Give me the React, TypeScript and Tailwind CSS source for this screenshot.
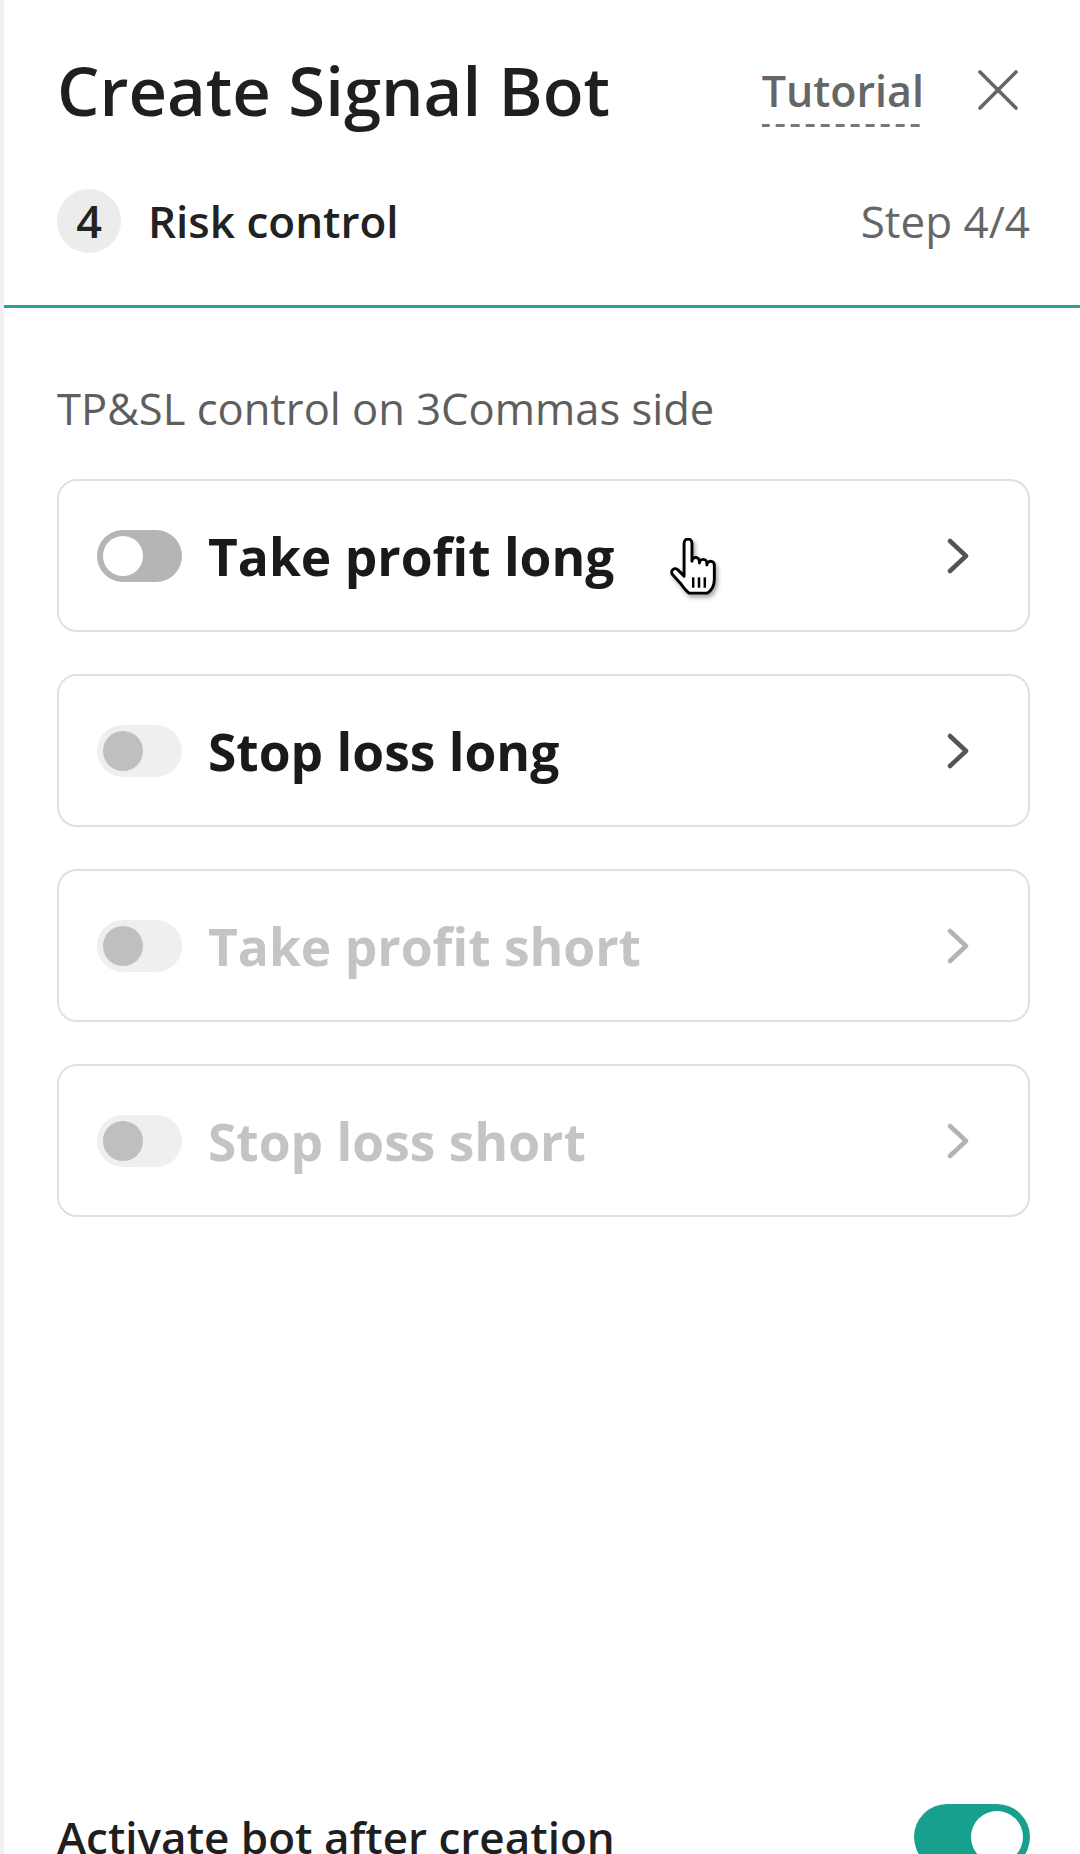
import React from 'react';

type RowProps = {
  label: string;
  variant: 'off' | 'disabled' | 'muted';
  cursor?: boolean;
};

function CloseIcon() {
  return (
    <svg width="42" height="42" viewBox="0 0 42 42" fill="none" stroke="#666666" strokeWidth="3.6" strokeLinecap="round">
      <line x1="3" y1="3" x2="39" y2="39" />
      <line x1="39" y1="3" x2="3" y2="39" />
    </svg>
  );
}

function Chevron({ color }: { color: string }) {
  return (
    <svg width="22" height="36" viewBox="0 0 22 36" fill="none" stroke={color} strokeWidth="4.5" strokeLinecap="round" strokeLinejoin="round">
      <polyline points="3,3 19,18 3,33" />
    </svg>
  );
}

function HandCursor() {
  return (
    <svg
      width="52"
      height="58"
      viewBox="0 0 25 28"
      className="absolute left-[608px] top-[57px] drop-shadow-[2px_3px_2px_rgba(0,0,0,0.35)]"
    >
      <path
        d="M8.2 2.4a1.9 1.9 0 0 1 3.8 0V11.2a1.8 1.8 0 0 1 3.6 0v0.9a1.8 1.8 0 0 1 3.6 0v0.9a1.8 1.8 0 0 1 3.6 0V20c0 3-1.6 5.4-3.4 6.6H10.6c-1.4-1-2.8-2.8-4.2-4.8L2.6 17.6a1.7 1.7 0 0 1 2.6-2.2L8.2 18.4Z"
        fill="#ffffff"
        stroke="#000000"
        strokeWidth="1.4"
        strokeLinejoin="round"
      />
      <line x1="12.6" y1="19" x2="12.6" y2="24" stroke="#000" strokeWidth="1.2" />
      <line x1="15.4" y1="19" x2="15.4" y2="24" stroke="#000" strokeWidth="1.2" />
      <line x1="18.2" y1="19" x2="18.2" y2="24" stroke="#000" strokeWidth="1.2" />
    </svg>
  );
}

function RiskRow({ label, variant, cursor }: RowProps) {
  const off = variant === 'off';
  const muted = variant === 'muted';
  return (
    <div className="relative flex h-[153px] items-center rounded-[20px] border-2 border-[#e0e0e0] bg-white pl-[38px] pr-[59px]">
      {off ? (
        <div className="flex h-[52px] w-[85px] shrink-0 items-center rounded-full bg-[#b5b5b5] pl-[6px]">
          <div className="h-[40px] w-[40px] rounded-full bg-white" />
        </div>
      ) : (
        <div className="flex h-[52px] w-[85px] shrink-0 items-center rounded-full bg-[#efefef] pl-[6px]">
          <div className="h-[40px] w-[40px] rounded-full bg-[#bfbfbf]" />
        </div>
      )}
      <span
        className={
          'ml-[26px] text-[51.5px] font-bold leading-[64px] ' +
          (muted ? 'text-[#c4c4c4]' : 'text-[#1a1a1a]')
        }
      >
        {label}
      </span>
      <div className="ml-auto flex items-center">
        <Chevron color={muted ? '#b3b3b3' : '#555555'} />
      </div>
      {cursor && <HandCursor />}
    </div>
  );
}

export default function App() {
  return (
    <div className="relative h-[1854px] w-[1080px] overflow-hidden border-l-4 border-[#f1f1f1] bg-white font-['Open_Sans','Noto_Sans',sans-serif]">
      <div className="border-b-[3px] border-[#2aa197] pb-[52px] pl-[53px] pr-[50px] pt-[50px]">
        <div className="flex h-[80px] items-center justify-between">
          <h1 className="text-[67px] font-semibold leading-[80px] text-[#1f1f1f]">Create Signal Bot</h1>
          <div className="mr-[11px] flex items-center gap-[53px]">
            <span className="mt-[14px] bg-[linear-gradient(to_right,#777777_62%,transparent_62%)] bg-[length:15px_3px] bg-bottom bg-repeat-x pb-[12px] text-[43px] font-semibold leading-[48px] text-[#666666]">
              Tutorial
            </span>
            <CloseIcon />
          </div>
        </div>
        <div className="mt-[59px] flex h-[64px] items-center justify-between">
          <div className="flex items-center">
            <div className="flex h-[64px] w-[64px] items-center justify-center rounded-full bg-[#ececec] text-[45px] font-semibold text-[#222222]">
              4
            </div>
            <span className="ml-[27px] text-[44px] font-semibold leading-[64px] text-[#222222]">Risk control</span>
          </div>
          <span className="text-[44px] leading-[64px] text-[#666666]">Step 4/4</span>
        </div>
      </div>

      <div className="pl-[53px] pr-[50px] pt-[73px]">
        <p className="text-[43.5px] leading-[56px] text-[#5e5e5e]">TP&amp;SL control on 3Commas side</p>
        <div className="mt-[42px] flex flex-col gap-[42px]">
          <RiskRow label="Take profit long" variant="off" cursor />
          <RiskRow label="Stop loss long" variant="disabled" />
          <RiskRow label="Take profit short" variant="muted" />
          <RiskRow label="Stop loss short" variant="muted" />
        </div>

        <div className="mt-[587px] flex h-[66px] items-center justify-between">
          <span className="text-[44px] font-semibold leading-[66px] text-[#1f1f1f]">Activate bot after creation</span>
          <div className="flex h-[66px] w-[116px] items-center justify-end rounded-full bg-[#17a08e] pr-[7px]">
            <div className="h-[52px] w-[52px] rounded-full bg-white" />
          </div>
        </div>
      </div>
    </div>
  );
}
